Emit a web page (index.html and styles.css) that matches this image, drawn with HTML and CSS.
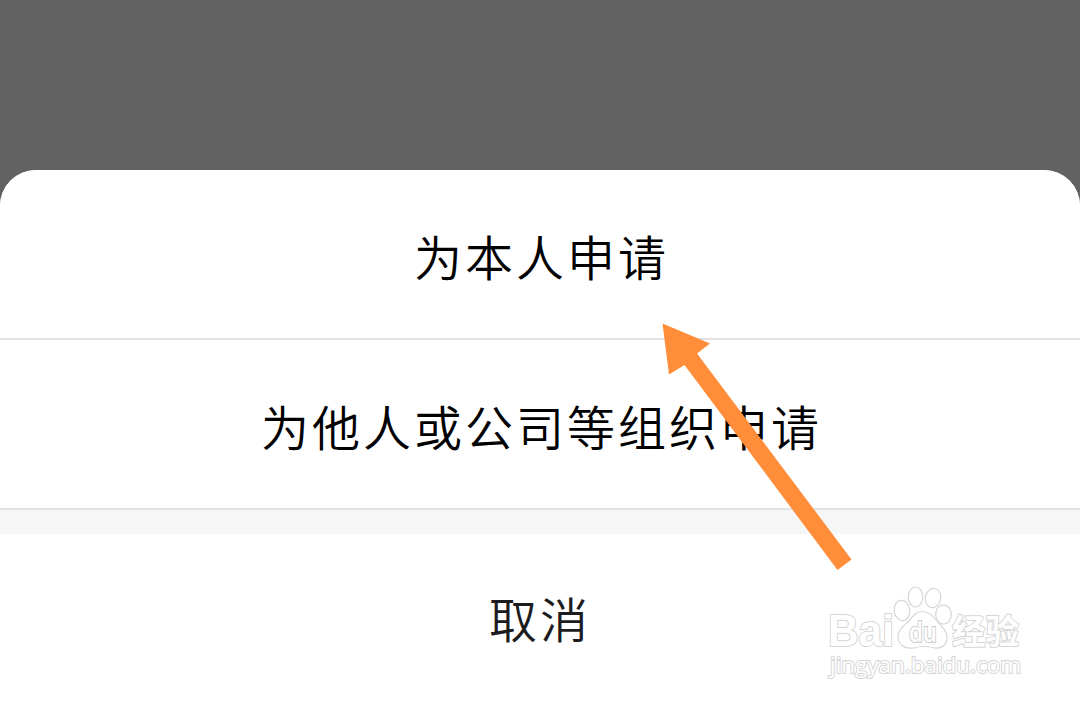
FILE: index.html
```html
<!DOCTYPE html>
<html lang="zh-CN">
  <head>
    <meta charset="UTF-8" />
    <meta name="viewport" content="width=device-width, initial-scale=1.0" />
    <title>申请</title>
    <link rel="stylesheet" href="styles.css">
  </head>
  <body>
    <div class="sheet">
      <button class="option">为本人申请</button>
      <button class="option">为他人或公司等组织申请</button>
      <div class="gap"></div>
      <button class="option cancel">取消</button>
    </div>

    <svg class="arrow" width="190" height="248" viewBox="0 0 190 248">
      <path d="M0.500 1.500L48 21.500L35 31.500L189.500 237.500L175.500 248L22.500 43L7 52.500Z" />
    </svg>

    <svg class="watermark" width="210" height="102" viewBox="0 0 210 102">
      <g class="paw">
        <ellipse cx="78" cy="30.500" rx="7.800" ry="10.200" transform="rotate(-8 78 30.500)" />
        <ellipse cx="91.500" cy="17" rx="7.300" ry="10" />
        <ellipse cx="109" cy="18" rx="7.700" ry="9.700" transform="rotate(12 109 18)" />
        <ellipse cx="119.500" cy="34.500" rx="7.800" ry="9.700" />
        <path d="M98 31.500C104 31.500 108 35 112 40C117 46 123 50 123 58C123 65 117 69 111 68C103 66 96 66 90 68C82 69 75 66 74 58C73 50 80 46 85 41C89 36 92 31.500 98 31.500Z" />
      </g>
      <text class="brand" x="4" y="66" textLength="66" lengthAdjust="spacingAndGlyphs">Bai</text>
      <text class="du" x="85" y="62" textLength="28" lengthAdjust="spacingAndGlyphs">du</text>
      <text class="brand-cn" x="128" y="64" textLength="67" lengthAdjust="spacingAndGlyphs">经验</text>
      <text class="site" x="6" y="92.500" textLength="191" lengthAdjust="spacingAndGlyphs">jingyan.baidu.com</text>
    </svg>
  </body>
</html>
```

FILE: styles.css
```css
* {
  margin: 0;
  padding: 0;
  box-sizing: border-box;
}

body {
  height: 100vh;
  padding-top: 170px;
  overflow: hidden;
  background: #626262;
  font-family: KaiTi, "Noto Sans CJK SC", sans-serif;
}

.sheet {
  display: flex;
  flex-direction: column;
  height: 532px;
  background: #fff;
  border-radius: 36px 36px 0 0;
  overflow: hidden;
}

.option {
  height: 170px;
  padding-top: 2px;
  border: none;
  border-bottom: 2px solid #e3e3e3;
  background: #fff;
  color: #000;
  font-family: inherit;
  font-size: 48px;
  font-weight: 350;
  letter-spacing: 3px;
  text-indent: 3px;
  line-height: 70px;
}

.gap {
  height: 24px;
  background: #f6f6f6;
}

.cancel {
  height: 168px;
  padding: 0 3px 2px 0;
  border-bottom: none;
  color: #1c1c1e;
}

.arrow {
  position: absolute;
  left: 662px;
  top: 322px;
  fill: #ff8d3a;
}

.watermark {
  position: absolute;
  left: 824px;
  top: 580px;
  fill: #fff;
  stroke: #d6d6d6;
  stroke-width: 1.2px;
  font-family: "Open Sans", "Noto Sans CJK SC", sans-serif;
}

.watermark text {
  stroke-width: 2px;
  paint-order: stroke;
}

.brand {
  font-family: "Liberation Sans", sans-serif;
  font-size: 44px;
  font-weight: bold;
}

.watermark .du {
  font-size: 27px;
  font-weight: 600;
  stroke: #cacaca;
}

.brand-cn {
  font-family: "Noto Sans CJK SC", sans-serif;
  font-size: 34px;
  font-weight: bold;
}

.site {
  font-size: 22px;
}
```
